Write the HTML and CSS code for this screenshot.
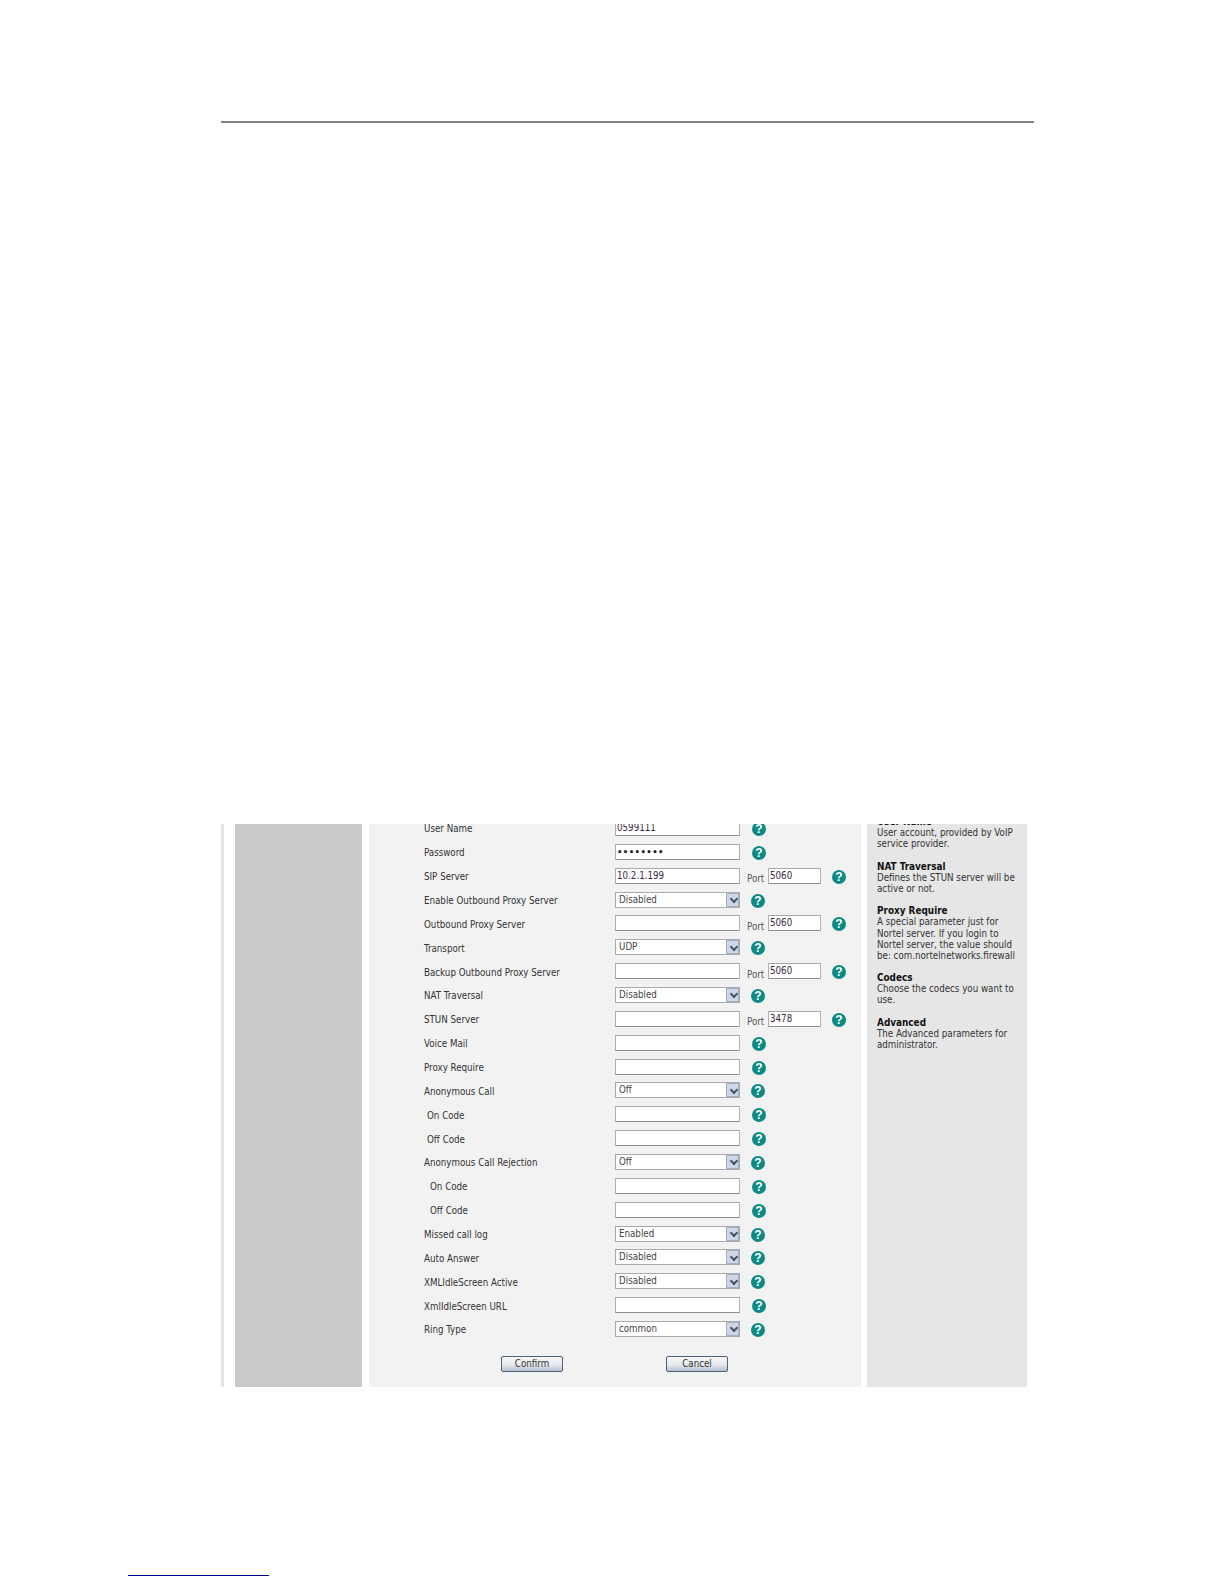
FILE: index.html
```html
<!DOCTYPE html>
<html lang="en">
<head>
<meta charset="utf-8">
<title>Account settings</title>
<link rel="stylesheet" href="styles.css">
</head>
<body>
<div class="page">
  <div class="top-rule"></div>
  <div class="shot">
    <div class="strip"></div>
    <div class="nav"></div>
    <div class="main">
      <div class="form">
        <div class="row"><span class="label">User Name</span><span class="field">0599111</span><span class="help">?</span></div>
        <div class="row"><span class="label">Password</span><span class="field dots">••••••••</span><span class="help">?</span></div>
        <div class="row"><span class="label">SIP Server</span><span class="field">10.2.1.199</span><span class="port">Port</span><span class="field small">5060</span><span class="help far">?</span></div>
        <div class="row"><span class="label">Enable Outbound Proxy Server</span><span class="field select">Disabled<i class="arrow"></i></span><span class="help sel">?</span></div>
        <div class="row"><span class="label">Outbound Proxy Server</span><span class="field"></span><span class="port">Port</span><span class="field small">5060</span><span class="help far">?</span></div>
        <div class="row"><span class="label">Transport</span><span class="field select">UDP<i class="arrow"></i></span><span class="help sel">?</span></div>
        <div class="row"><span class="label">Backup Outbound Proxy Server</span><span class="field"></span><span class="port">Port</span><span class="field small">5060</span><span class="help far">?</span></div>
        <div class="row"><span class="label">NAT Traversal</span><span class="field select">Disabled<i class="arrow"></i></span><span class="help sel">?</span></div>
        <div class="row"><span class="label">STUN Server</span><span class="field"></span><span class="port">Port</span><span class="field small">3478</span><span class="help far">?</span></div>
        <div class="row"><span class="label">Voice Mail</span><span class="field"></span><span class="help">?</span></div>
        <div class="row"><span class="label">Proxy Require</span><span class="field"></span><span class="help">?</span></div>
        <div class="row"><span class="label">Anonymous Call</span><span class="field select">Off<i class="arrow"></i></span><span class="help sel">?</span></div>
        <div class="row"><span class="label in1">On Code</span><span class="field"></span><span class="help">?</span></div>
        <div class="row"><span class="label in1">Off Code</span><span class="field"></span><span class="help">?</span></div>
        <div class="row"><span class="label">Anonymous Call Rejection</span><span class="field select">Off<i class="arrow"></i></span><span class="help sel">?</span></div>
        <div class="row"><span class="label in2">On Code</span><span class="field"></span><span class="help">?</span></div>
        <div class="row"><span class="label in2">Off Code</span><span class="field"></span><span class="help">?</span></div>
        <div class="row"><span class="label">Missed call log</span><span class="field select">Enabled<i class="arrow"></i></span><span class="help sel">?</span></div>
        <div class="row"><span class="label">Auto Answer</span><span class="field select">Disabled<i class="arrow"></i></span><span class="help sel">?</span></div>
        <div class="row"><span class="label">XMLIdleScreen Active</span><span class="field select">Disabled<i class="arrow"></i></span><span class="help sel">?</span></div>
        <div class="row"><span class="label">XmlIdleScreen URL</span><span class="field"></span><span class="help">?</span></div>
        <div class="row"><span class="label">Ring Type</span><span class="field select">common<i class="arrow"></i></span><span class="help sel">?</span></div>
      </div>
      <div class="actions">
        <span class="btn">Confirm</span>
        <span class="btn">Cancel</span>
      </div>
    </div>
    <div class="side">
      <div class="notes">
        <p><b>User Name</b><br>User account, provided by VoIP service provider.</p>
        <p><b>NAT Traversal</b><br>Defines the STUN server will be active or not.</p>
        <p><b>Proxy Require</b><br>A special parameter just for Nortel server. If you login to Nortel server, the value should be: com.nortelnetworks.firewall</p>
        <p><b>Codecs</b><br>Choose the codecs you want to use.</p>
        <p><b>Advanced</b><br>The Advanced parameters for administrator.</p>
      </div>
    </div>
  </div>
  <div class="foot-rule"></div>
</div>
</body>
</html>
```
FILE: styles.css
```css
* { box-sizing: border-box; }
html, body { margin: 0; padding: 0; background: #fff; }
body { font-family: "DejaVu Sans", sans-serif; font-stretch: condensed; color: #333; }
.page { width: 1224px; height: 1584px; padding-top: 121px; overflow: hidden; }
.top-rule { height: 2px; margin-left: 221px; width: 813px; background: #808080; }
.shot { display: flex; height: 563px; margin: 701px 0 0 221px; width: 806px; font-size: 9.7px; }
.strip { width: 3px; background: #e4e4e4; margin-right: 11px; }
.nav { width: 127px; background: #cacaca; margin-right: 7px; }
.main { width: 492px; background: #f2f2f2; margin-right: 6px; padding-left: 55px; overflow: hidden; }
.side { width: 160px; background: #e6e6e6; padding-left: 10px; overflow: hidden; }
.form { margin-top: -7px; }
.row { display: flex; align-items: center; height: 23.86px; }
.label { width: 191px; white-space: nowrap; }
.label.in1 { padding-left: 3px; }
.label.in2 { padding-left: 6px; }
.field { position: relative; display: block; width: 125px; height: 16px; margin-top: -2px; line-height: 14px; padding-left: 1px; background: #fff; border: 1px solid #b4b4b4; border-top-color: #a8a8a8; border-left-color: #b0b0b0; border-bottom-color: #8f8f8f; white-space: nowrap; color: #3a2a45; }
.field.small { width: 53px; }
.field.dots { font-weight: bold; font-size: 9.5px; letter-spacing: 0.4px; color: #222; }
.field.select { padding-left: 3px; border-color: #a6a9ad; color: #444; }
.arrow { position: absolute; right: 0; top: 0; width: 13px; height: 14px; background: #cdd7e6; border: 1px solid #a3afc2; }
.arrow::after { content: ""; position: absolute; left: 3.5px; top: 2.5px; width: 4px; height: 4px; border-right: 2px solid #4a5567; border-bottom: 2px solid #4a5567; transform: rotate(45deg); }
.port { margin-left: 7px; width: 21px; padding-top: 4px; color: #555; }
.help { width: 14px; height: 14px; margin-left: 12px; border-radius: 50%; background: #0e8a85; color: #fff; font: bold 12px/14px "Liberation Sans", sans-serif; text-align: center; }
.help.sel { margin-left: 11px; }
.help.far { margin-left: 11px; }
.actions { display: flex; margin: 14px 0 0 77px; gap: 103px; }
.btn { display: block; width: 62px; height: 16px; line-height: 14px; text-align: center; border: 1px solid #4f6178; border-radius: 2px; background: linear-gradient(#f6f7f9, #e6e9ee 55%, #b4bfd0); color: #333; }
.notes { margin-top: -8px; line-height: 11.15px; }
.notes p { margin: 0 0 11.15px; }
.notes b { color: #111; font-size: 9.9px; }
.foot-rule { width: 141px; height: 1px; margin: 188px 0 0 128px; background: #00008b; }
```
